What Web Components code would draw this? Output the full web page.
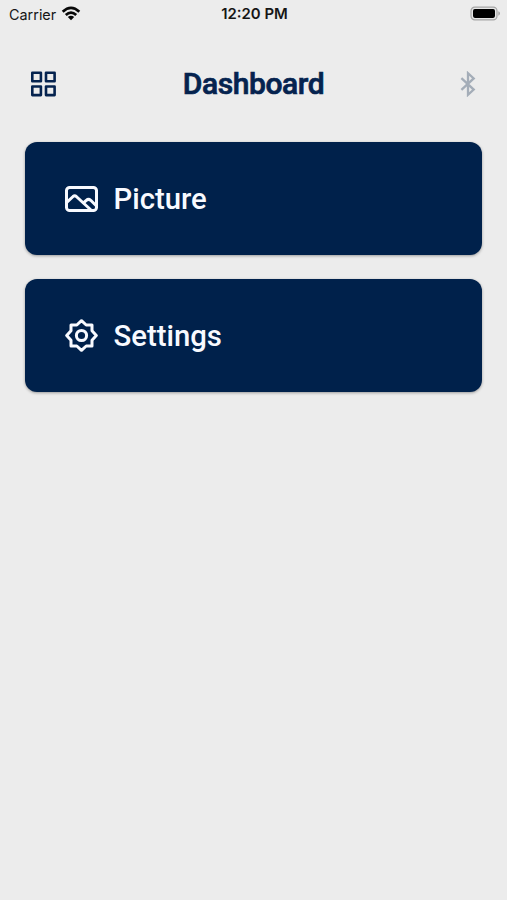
<!DOCTYPE html>
<html lang="en">
<head>
<meta charset="utf-8">
<title>Dashboard</title>
<style>
  body {
    background: #ececec;
    font-family: Roboto, sans-serif;
    margin: 0;
  }
</style>
</head>
<body>
<app-screen>
  <status-bar slot="status" carrier="Carrier" time="12:20 PM"></status-bar>
  <app-header slot="header">
    <app-icon slot="start" name="grid"></app-icon>
    Dashboard
    <app-icon slot="end" name="bluetooth"></app-icon>
  </app-header>
  <menu-card icon="picture">Picture</menu-card>
  <menu-card icon="settings">Settings</menu-card>
</app-screen>

<script>
const ICONS = {
  grid: {
    width: 28,
    height: 26,
    body: '<g fill="none" stroke="#05234f" stroke-width="2.6" stroke-linejoin="round"><rect x="2.3" y="1.7" width="8.6" height="8.6"/><rect x="16" y="1.7" width="8.6" height="8.6"/><rect x="2.3" y="15.5" width="8.6" height="8.6"/><rect x="16" y="15.5" width="8.6" height="8.6"/></g>'
  },
  bluetooth: {
    width: 18,
    height: 26,
    body: '<path d="M2.4 7.2 14.7 18.6 9 23.8V2.2L14.7 7.4 2.4 18.8" fill="none" stroke="#a4adb8" stroke-width="2.3"/>'
  },
  picture: {
    width: 35,
    height: 28,
    body: '<g transform="translate(0.5 0)" fill="none" stroke="#f8faff" stroke-width="3" stroke-linejoin="round" stroke-linecap="round"><rect x="2" y="2.4" width="30" height="23.2" rx="3.2"/><path d="M2.5 17.2 8.6 11.5Q10.2 10.1 11.8 11.5L26.5 25"/><path d="M19.2 17.7 21.8 15.3Q24 13.4 26.2 15.3L31.5 20.5"/></g>'
  },
  settings: {
    width: 35,
    height: 34,
    body: '<g transform="translate(0.5 -0.5)" fill="none" stroke="#f8faff" stroke-width="3" stroke-linejoin="round"><path d="M17 2.2 21.7 6.5H27.5V12.3L31.8 17 27.5 21.7V27.5H21.7L17 31.8 12.3 27.5H6.5V21.7L2.2 17 6.5 12.3V6.5H12.3Z"/><circle cx="17" cy="17" r="5.1"/></g>'
  },
  wifi: {
    width: 20,
    height: 16,
    body: '<g transform="translate(0.5 0)"><g fill="none" stroke="#080808" stroke-width="2.7"><path d="M1.2 5.7Q9.5 -2.1 17.8 5.7"/><path d="M4.3 9.1Q9.5 4.2 14.7 9.1"/></g><path d="M6.3 11.1Q9.5 8.4 12.7 11.1L9.5 14.3Z" fill="#080808"/></g>'
  },
  battery: {
    width: 30,
    height: 16,
    body: '<rect x="1" y="1.1" width="26" height="12.8" rx="3.8" fill="#e6e6e6" stroke="#a5a5a5" stroke-width="1.2"/><rect x="3" y="3.1" width="22" height="8.8" rx="1.8" fill="#000"/><path d="M28.3 5.3Q30 5.9 30 7.5T28.3 9.7Z" fill="#a5a5a5"/>'
  }
};

class AppIcon extends HTMLElement {
  constructor() {
    super();

    this.attachShadow( {mode: 'open'} );
  }

  connectedCallback() {
    const icon = ICONS[this.getAttribute( 'name' )];

    this.shadowRoot.innerHTML = `
      <style>
        :host {
          display: block;
          flex: none;
        }

        svg {
          display: block;
        }
      </style>
      <svg width="${icon.width}" height="${icon.height}" viewBox="0 0 ${icon.width} ${icon.height}">${icon.body}</svg>
    `;
  }
}

class StatusBar extends HTMLElement {
  constructor() {
    super();

    const template = document.createElement( 'template' );
    template.innerHTML = `
      <style>
        :host {
          align-items: center;
          box-sizing: border-box;
          color: #161616;
          display: grid;
          font-family: Inter, sans-serif;
          grid-template-columns: 1fr auto 1fr;
          height: 27px;
          line-height: 27px;
          padding: 0 7px 0 9px;
        }

        div {
          align-items: center;
          display: flex;
          gap: 5px;
        }

        .carrier {
          font-size: 14.4px;
        }

        .time {
          font-size: 14.9px;
          font-weight: 600;
          padding-top: 1px;
        }

        .end {
          justify-content: flex-end;
        }
      </style>
      <div><span class="carrier"></span><app-icon name="wifi"></app-icon></div>
      <span class="time"></span>
      <div class="end"><app-icon name="battery"></app-icon></div>
    `;

    // Root
    const shadowRoot = this.attachShadow( {mode: 'open'} );
    shadowRoot.appendChild( template.content.cloneNode( true ) );

    // Elements
    this.$carrier = shadowRoot.querySelector( '.carrier' );
    this.$time = shadowRoot.querySelector( '.time' );
  }

  connectedCallback() {
    this.$carrier.innerText = this.getAttribute( 'carrier' );
    this.$time.innerText = this.getAttribute( 'time' );
  }
}

class AppHeader extends HTMLElement {
  constructor() {
    super();

    const template = document.createElement( 'template' );
    template.innerHTML = `
      <style>
        :host {
          align-items: center;
          box-sizing: border-box;
          display: grid;
          grid-template-columns: 1fr auto 1fr;
          height: 114px;
          padding: 0 30px;
        }

        h1 {
          color: #05234f;
          font-size: 30px;
          font-weight: 500;
          letter-spacing: -0.4px;
          line-height: 36px;
          margin: 0;
          -webkit-text-stroke: 0.7px #05234f;
        }

        .end {
          justify-self: end;
        }
      </style>
      <slot name="start"></slot>
      <h1><slot></slot></h1>
      <div class="end"><slot name="end"></slot></div>
    `;

    const shadowRoot = this.attachShadow( {mode: 'open'} );
    shadowRoot.appendChild( template.content.cloneNode( true ) );
  }
}

class MenuCard extends HTMLElement {
  constructor() {
    super();

    const template = document.createElement( 'template' );
    template.innerHTML = `
      <style>
        :host {
          align-items: center;
          background: #00214b;
          border-radius: 12px;
          box-shadow: 0 1px 3px rgba( 0, 0, 0, 0.35 );
          box-sizing: border-box;
          color: #f8faff;
          cursor: pointer;
          display: flex;
          font-size: 29.3px;
          font-weight: 500;
          gap: 14.5px;
          height: 113px;
          line-height: 36px;
          padding: 0 39px;
        }
      </style>
      <app-icon></app-icon>
      <span><slot></slot></span>
    `;

    const shadowRoot = this.attachShadow( {mode: 'open'} );
    this.$icon = template.content.querySelector( 'app-icon' );
    this.$icon.setAttribute( 'name', this.getAttribute( 'icon' ) );
    shadowRoot.appendChild( template.content.cloneNode( true ) );
  }
}

class AppScreen extends HTMLElement {
  constructor() {
    super();

    const template = document.createElement( 'template' );
    template.innerHTML = `
      <style>
        :host {
          display: block;
          min-height: 900px;
        }

        main {
          display: flex;
          flex-direction: column;
          gap: 24px;
          padding: 1px 25px 0;
        }
      </style>
      <slot name="status"></slot>
      <slot name="header"></slot>
      <main><slot></slot></main>
    `;

    const shadowRoot = this.attachShadow( {mode: 'open'} );
    shadowRoot.appendChild( template.content.cloneNode( true ) );
  }
}

window.customElements.define( 'app-icon', AppIcon );
window.customElements.define( 'status-bar', StatusBar );
window.customElements.define( 'app-header', AppHeader );
window.customElements.define( 'menu-card', MenuCard );
window.customElements.define( 'app-screen', AppScreen );
</script>
</body>
</html>
